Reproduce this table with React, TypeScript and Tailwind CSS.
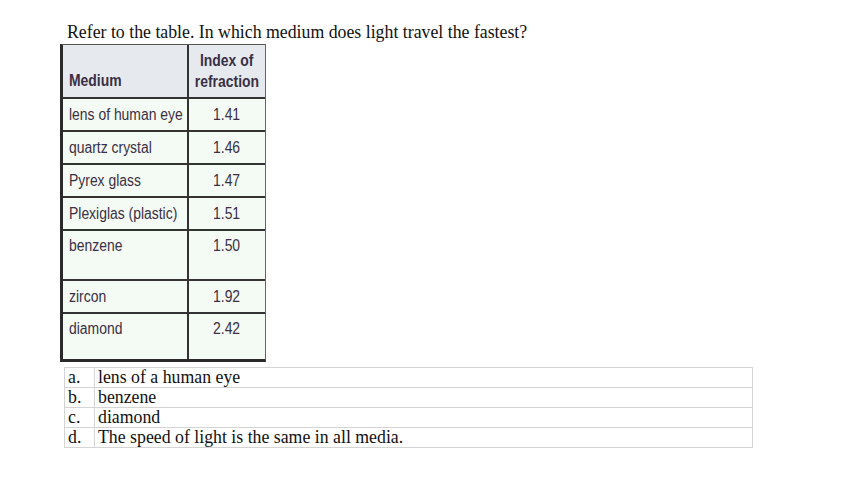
const rows: { name: string; value: string; h: string; top?: boolean }[] = [
  { name: "lens of human eye", value: "1.41", h: "h-[33px]" },
  { name: "quartz crystal", value: "1.46", h: "h-[33px]" },
  { name: "Pyrex glass", value: "1.47", h: "h-[33px]" },
  { name: "Plexiglas (plastic)", value: "1.51", h: "h-[33px]" },
  { name: "benzene", value: "1.50", h: "h-[50px]", top: true },
  { name: "zircon", value: "1.92", h: "h-[33px]" },
  { name: "diamond", value: "2.42", h: "h-[47px]", top: true },
]

const answers = [
  ["a.", "lens of a human eye"],
  ["b.", "benzene"],
  ["c.", "diamond"],
  ["d.", "The speed of light is the same in all media."],
]

// the table in the source is a scanned image set in a condensed face
function Narrow({ children, center }: { children: React.ReactNode; center?: boolean }) {
  return (
    <span className={`inline-block whitespace-nowrap scale-x-[0.87] ${center ? "origin-center" : "origin-left"}`}>
      {children}
    </span>
  )
}

function RefractionTable() {
  return (
    <div
      className="ml-[60px] w-[206px] border-t border-t-[#555] border-l-[3px] border-l-[#2a2a2a] border-r border-r-[#666] border-b-[3px] border-b-[#2a2a2a] text-[#3a2f45] text-[16px] leading-[18px]"
      style={{ fontFamily: '"Liberation Sans", Arial, sans-serif' }}
    >
      <div className="flex h-[52px] bg-[#e6eaee] font-bold">
        <div className="w-[126px] border-r-2 border-[#333] flex items-end pl-[6px] pb-[7px]">
          <Narrow>Medium</Narrow>
        </div>
        <div className="flex-1 flex flex-col items-center justify-center leading-[21px]">
          <Narrow center>Index of</Narrow>
          <Narrow center>refraction</Narrow>
        </div>
      </div>
      {rows.map((r) => (
        <div key={r.name} className={`flex ${r.h} bg-[#f4fbf4] border-t-2 border-[#333]`}>
          <div
            className={`w-[126px] border-r-2 border-[#333] flex pl-[6px] ${r.top ? "items-start pt-[6px]" : "items-center"}`}
          >
            <Narrow>{r.name}</Narrow>
          </div>
          <div className={`flex-1 flex justify-center ${r.top ? "items-start pt-[6px]" : "items-center"}`}>
            <Narrow center>{r.value}</Narrow>
          </div>
        </div>
      ))}
    </div>
  )
}

export default function App() {
  return (
    <div
      className="w-[847px] h-[486px] bg-white text-[#111] pt-[22px]"
      style={{ fontFamily: '"Liberation Serif", "Times New Roman", serif' }}
    >
      <p className="ml-[67px] text-[17.8px] leading-[20px] h-[22px]">
        Refer to the table. In which medium does light travel the fastest?
      </p>
      <RefractionTable />
      <table className="ml-[64px] mt-[5px] w-[689px] border-collapse text-[17.8px] leading-[19px]">
        <tbody>
          {answers.map(([letter, text]) => (
            <tr key={letter}>
              <td className="w-[30px] border border-[#d4d4d4] pl-[3px] align-top">{letter}</td>
              <td className="border border-[#d4d4d4] pl-[3px]">{text}</td>
            </tr>
          ))}
        </tbody>
      </table>
    </div>
  )
}
